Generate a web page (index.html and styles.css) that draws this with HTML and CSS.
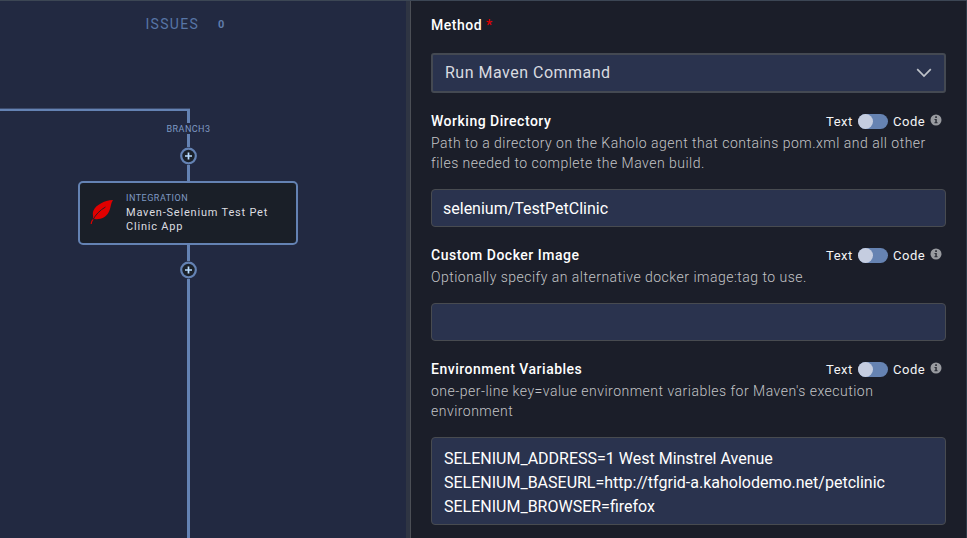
FILE: index.html
```html
<!DOCTYPE html>
<html lang="en">
<head>
<meta charset="utf-8">
<title>Pipeline designer</title>
<link rel="stylesheet" href="styles.css">
</head>
<body>
<div class="app">
  <main class="canvas">
    <div class="tab"><span class="tab-name">ISSUES</span><span class="tab-count">0</span></div>
    <div class="flow">
      <div class="elbow"></div>
      <span class="branch">BRANCH3</span>
      <div class="link link-a"></div>
      <svg class="add" viewBox="0 0 17 18"><circle cx="8.500" cy="9" r="7.3"/><path d="M5 9h7M8.500 5.500v7"/></svg>
      <div class="link link-b"></div>
      <div class="node">
        <svg class="feather" viewBox="0 0 24 26"><path fill="#e00000" d="M23 1C14 1.500 6 6 3.500 11.500C2 15 3.600 16.500 3 19C2 21 .8 22.500 .6 25L1.800 25C2 23 2.800 21.500 4 20C10 21 16 18.500 18.500 13.500C21 9.500 20.500 4.500 23 1Z"/><path fill="none" stroke="#1b1f28" stroke-width=".9" d="M3 20.500C5.500 16 10 11 15.500 8M1.500 19.500l4 1"/></svg>
        <div class="node-text"><div class="kind">INTEGRATION</div><div class="title">Maven-Selenium Test Pet<br>Clinic App</div></div>
      </div>
      <div class="link link-c"></div>
      <svg class="add" viewBox="0 0 17 18"><circle cx="8.500" cy="9" r="7.3"/><path d="M5 9h7M8.500 5.500v7"/></svg>
      <div class="link link-d"></div>
    </div>
  </main>
  <div class="divider"></div>
  <aside class="panel">
    <div class="label method">Method <span class="req">*</span></div>
    <div class="select"><span>Run Maven Command</span><svg class="chevron" viewBox="0 0 16 10"><path d="M1.200 1.200L8 8l6.800-6.800"/></svg></div>

    <section class="field">
      <div class="head"><span class="label">Working Directory</span><div class="mode"><span class="text">Text</span><i class="toggle"></i><span class="code">Code</span><svg class="info" viewBox="0 0 12 12"><circle cx="6" cy="6" r="5.500"/><path d="M5.200 2.300h1.700v1.600H5.200zM4.500 4.900h2.300v3.300h.8v1H4.400v-1h.9V5.900h-.8z"/></svg></div></div>
      <p class="desc">Path to a directory on the Kaholo agent that contains pom.xml and all other<br>files needed to complete the Maven build.</p>
      <div class="input">selenium/TestPetClinic</div>
    </section>

    <section class="field">
      <div class="head"><span class="label">Custom Docker Image</span><div class="mode"><span class="text">Text</span><i class="toggle"></i><span class="code">Code</span><svg class="info" viewBox="0 0 12 12"><circle cx="6" cy="6" r="5.500"/><path d="M5.200 2.300h1.700v1.600H5.200zM4.500 4.900h2.300v3.300h.8v1H4.400v-1h.9V5.900h-.8z"/></svg></div></div>
      <p class="desc">Optionally specify an alternative docker image:tag to use.</p>
      <div class="input"></div>
    </section>

    <section class="field">
      <div class="head"><span class="label">Environment Variables</span><div class="mode"><span class="text">Text</span><i class="toggle"></i><span class="code">Code</span><svg class="info" viewBox="0 0 12 12"><circle cx="6" cy="6" r="5.500"/><path d="M5.200 2.300h1.700v1.600H5.200zM4.500 4.900h2.300v3.300h.8v1H4.400v-1h.9V5.900h-.8z"/></svg></div></div>
      <p class="desc">one-per-line key=value environment variables for Maven's execution<br>environment</p>
      <div class="input area">SELENIUM_ADDRESS=1 West Minstrel Avenue<br>SELENIUM_BASEURL=http://tfgrid-a.kaholodemo.net/petclinic<br>SELENIUM_BROWSER=firefox</div>
    </section>
  </aside>
</div>
</body>
</html>
```

FILE: styles.css
```css
* { box-sizing: border-box; }
body { margin: 0; background: #1b1e29; font-family: Roboto, sans-serif; }
.app { display: flex; width: 967px; height: 538px; overflow: hidden; border-top: 1px solid #3c4654; white-space: nowrap; }
.canvas { width: 406px; background: #222941; overflow: hidden; flex: none; }
.divider { width: 5px; flex: none; background: #2f3543; border-right: 1px solid #4b4e55; }
.panel { width: 556px; flex: none; background: #1b1e29; border-right: 1px solid #2d3a48; padding: 14px 20px 0; }

.tab { display: flex; align-items: center; height: 20px; margin-top: 13px; padding-left: 145.5px; color: #5f7cab; }
.tab-name { width: 72.5px; font-size: 14px; letter-spacing: 1.3px; color: #5775a6; }
.tab-count { font-size: 11px; font-weight: 700; }

.flow { display: flex; flex-direction: column; align-items: center; width: 221px; margin: 75px 0 0 78px; }
.elbow { align-self: flex-start; width: 190px; height: 14px; margin: 0 0 1px -78px; border: solid #6482b3; border-width: 2px 3px 0 0; box-shadow: 0 -1px 0 #3c4b6d; }
.branch { height: 10px; font-size: 9px; line-height: 10px; letter-spacing: .45px; color: #7f99c4; }
.link { width: 3px; background: #6482b3; }
.link-a { height: 13px; }
.link-b { height: 16px; }
.link-c { height: 16px; }
.link-d { height: 260px; }
.add { width: 17px; height: 18px; flex: none; }
.add circle { fill: #1b212a; stroke: #6482b3; stroke-width: 2.200; }
.add path { stroke: #b9dcff; stroke-width: 1.700; fill: none; }
.node { display: flex; align-self: flex-start; width: 220px; height: 64px; border: 2px solid #6482b3; border-radius: 5px; background: #1a1f28; padding: 9px 0 0 10px; }
.feather { width: 24px; height: 26px; margin-top: 7px; flex: none; }
.node-text { margin-left: 12px; }
.kind { font-size: 9px; line-height: 12px; letter-spacing: .5px; color: #7f99c4; }
.title { font-size: 11px; line-height: 14px; letter-spacing: .8px; color: #dcdde0; margin-top: 2px; }

.label { font-size: 14px; line-height: 20px; font-weight: 500; letter-spacing: .5px; color: #fff; }
.method { height: 20px; }
.req { color: #e00000; }
.select { display: flex; align-items: center; justify-content: space-between; width: 515px; height: 40px; margin-top: 18px; padding: 0 12px 2px 12px; border: 2px solid #444952; border-radius: 3px; background: #2a334e; color: #d9dbe0; font-size: 16px; letter-spacing: .5px; }
.chevron { width: 16px; height: 10px; margin-top: 2px; }
.chevron path { fill: none; stroke: #bfc3ca; stroke-width: 1.700; }

.field { margin-top: 18px; }
.head { display: flex; justify-content: space-between; align-items: center; height: 20px; width: 515px; }
.mode { display: flex; align-items: center; width: 120px; font-size: 13px; line-height: 20px; letter-spacing: .5px; color: #f4f4f5; }
.text { width: 32px; padding-top: 1px; }
.toggle { width: 30px; height: 15px; border-radius: 8px; background: #6683b2; display: flex; }
.toggle::before { content: ""; width: 15px; height: 15px; border-radius: 50%; background: #c5cde0; }
.code { width: 37px; margin-left: 5px; padding-top: 1px; }
.info { width: 12px; height: 12px; margin-top: -2px; }
.info circle { fill: #999ba0; }
.info path { fill: #2c2f38; }
.desc { margin: 2px 0 16px; font-size: 14px; line-height: 20px; font-weight: 300; letter-spacing: .49px; color: #c3c4c7; }
.input { width: 515px; height: 38px; border: 1px solid #484b50; border-radius: 4px; background: #2a334e; color: #fff; font-size: 16px; line-height: 24px; padding: 7px 11px; }
.area { height: 88px; padding: 9px 12px; }
```
